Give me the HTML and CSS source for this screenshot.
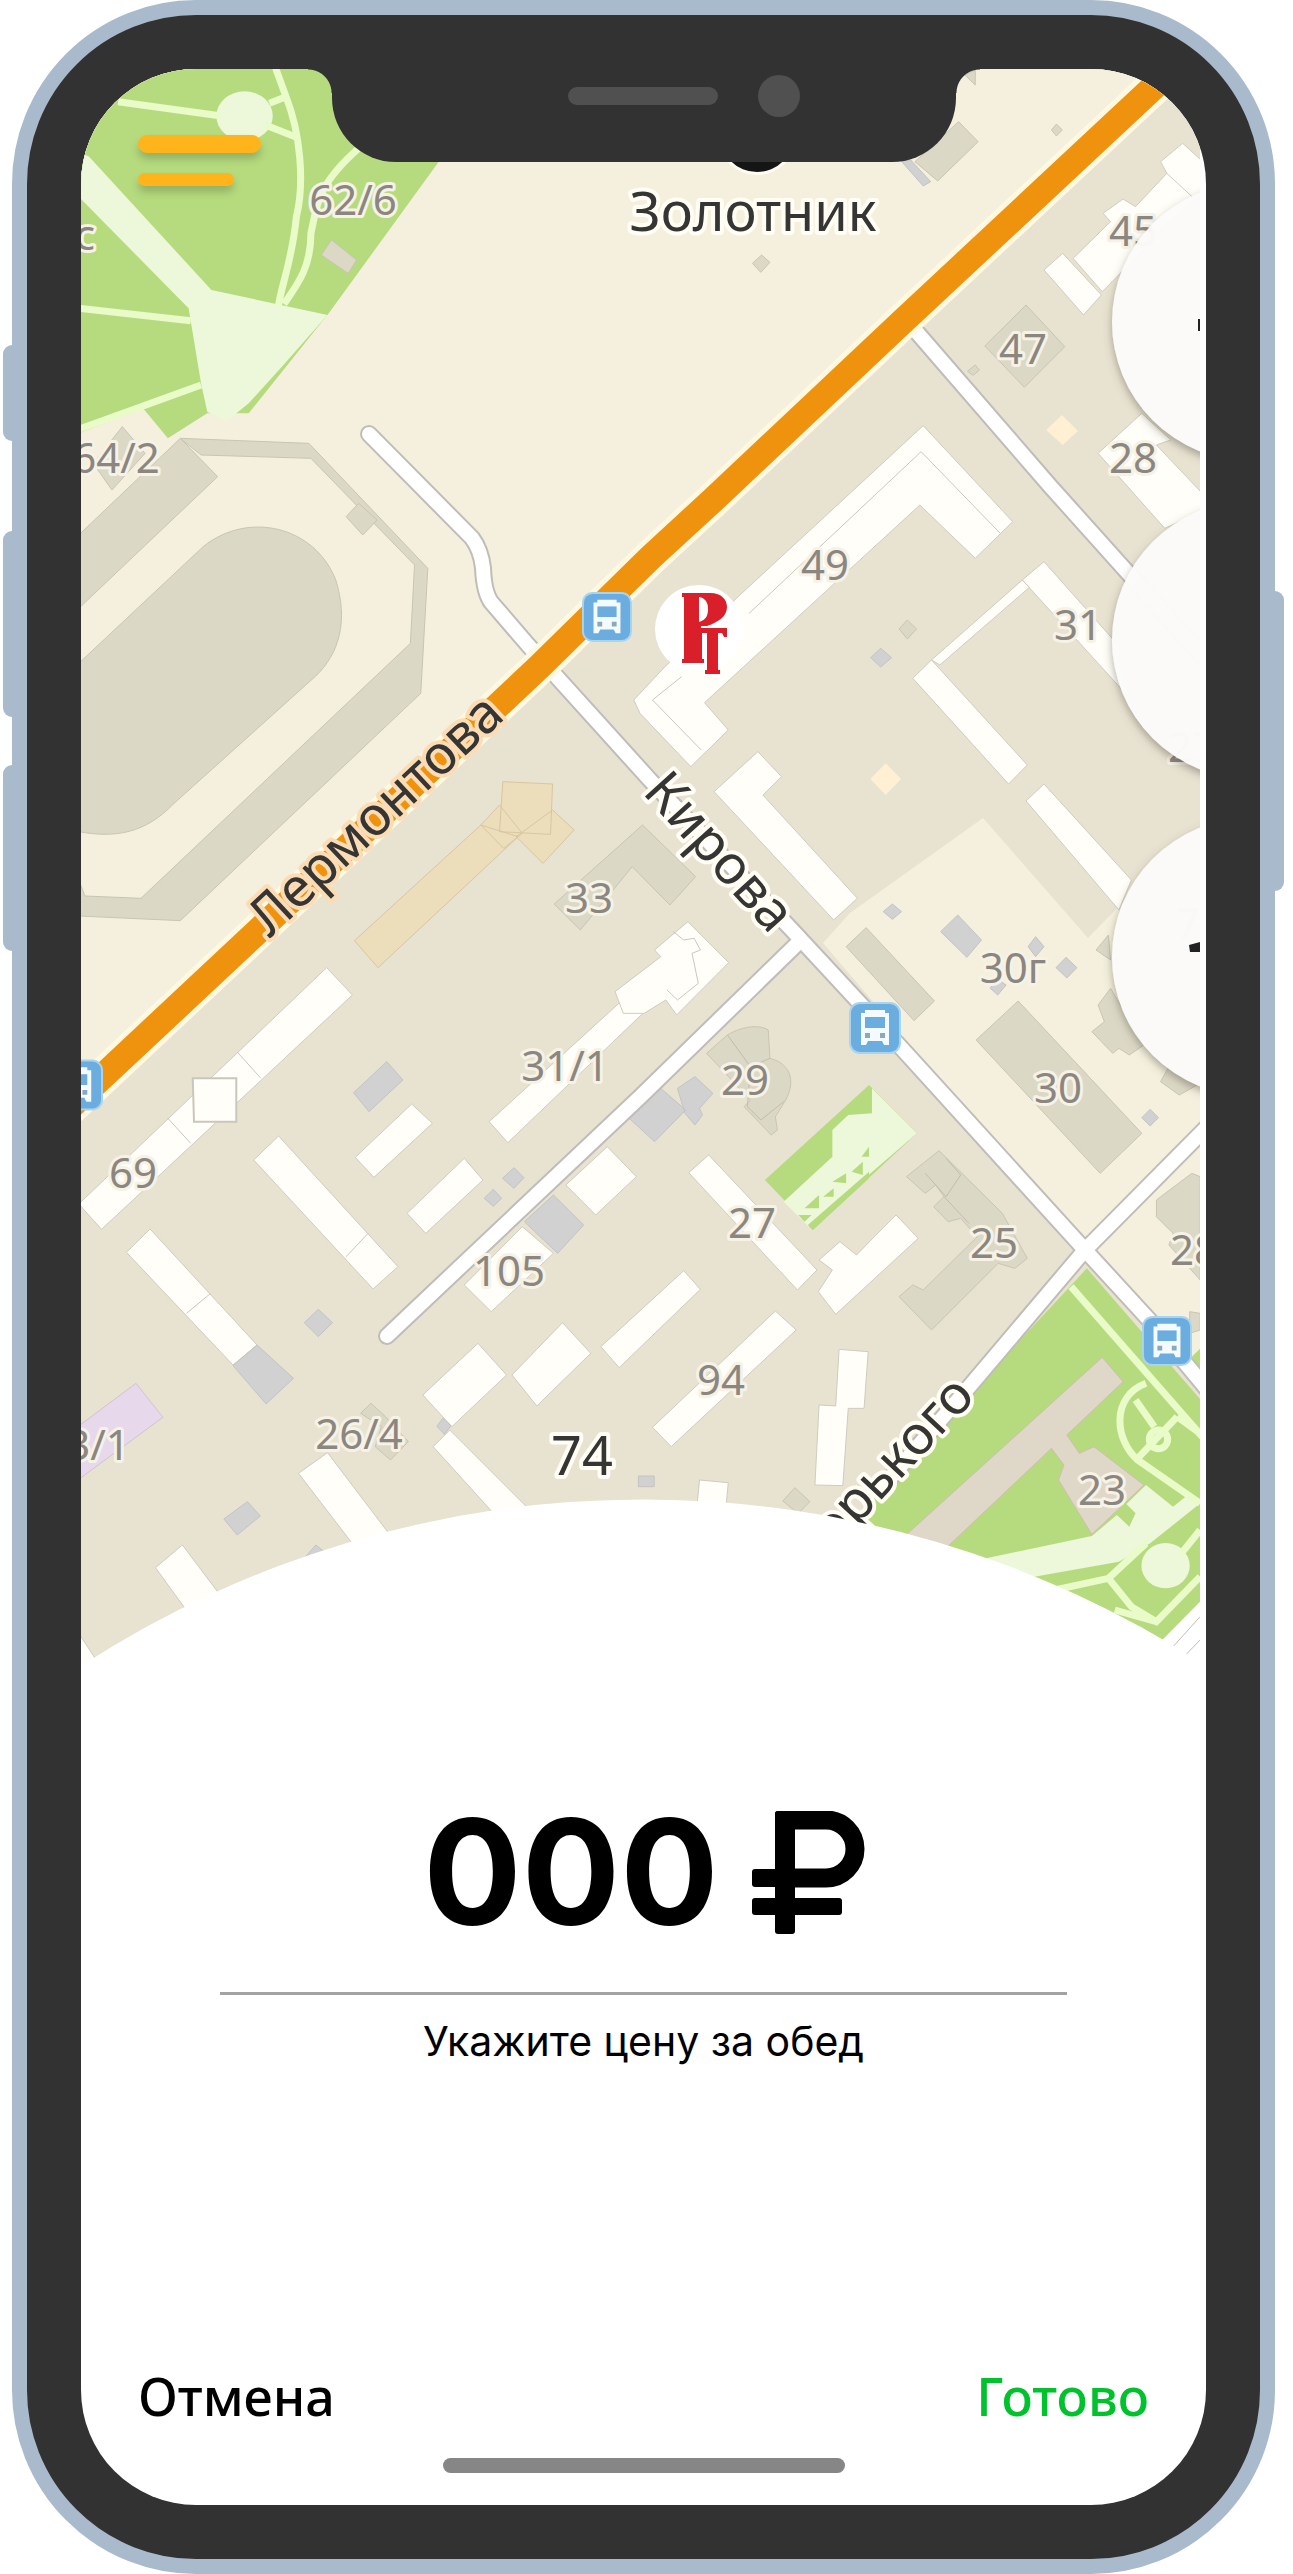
FILE: index.html
```html
<!DOCTYPE html>
<html lang="ru">
<head>
<meta charset="utf-8">
<meta name="viewport" content="width=device-width, initial-scale=1">
<title>Цена за обед</title>
<link rel="stylesheet" href="styles.css">
</head>
<body>
<main class="phone">
  <span class="key key-mute"></span>
  <span class="key key-up"></span>
  <span class="key key-down"></span>
  <span class="key key-power"></span>
  <div class="screen">
    <div class="map">
      <svg class="map-canvas" viewBox="81 69 1125 1631" role="img" aria-label="Карта: улицы Лермонтова, Кирова, Горького">
        <defs>
          <clipPath id="edge"><rect x="81" y="69" width="1119" height="1631"/></clipPath>
          <filter id="lift" x="-20%" y="-20%" width="140%" height="140%"><feDropShadow dx="0" dy="4" stdDeviation="4" flood-color="#5a5644" flood-opacity=".5"/></filter>
          <symbol id="bus" viewBox="0 0 52 52">
            <rect width="52" height="52" rx="11" fill="#a9d4ee"/>
            <rect x="2" y="2" width="48" height="48" rx="9" fill="#6cade0"/>
            <path d="M16 8h20v3h4v32h-5l-2-4H19l-2 4h-5V11h4z" fill="#f4fbff"/>
            <path d="M16 15h20v11H16z" fill="#6cade0"/>
            <path d="M16 31h5v5h-5zM31 31h5v5h-5z" fill="#8ba9bd"/>
          </symbol>
        </defs>
        <g clip-path="url(#edge)">
          <rect class="block" x="81" y="69" width="1125" height="1631"/>
          <path class="pale" d="M75 60H1176L902 322 713 500 651 557 539 667 257 932 75 1102z"/>
          <path class="pale" d="M983 818 1088 938 1120 905 1206 850V1400L1085 1250 823 943 850 913z"/>

          <!-- park and square, north-west -->
          <g transform="scale(.414541 .333333)">
            <path class="green" d="M190 200H1225L790 945 600 1240 500 1240 405 1315 345 1225 190 1300z"/>
            <path class="pale" d="M790 945 590 1260 490 1290 440 1330 850 1100z"/>
            <path class="lawn" d="M510 870 790 945 680 1100 600 1210 545 1265 500 1235 485 1150 455 925 190 590V455L215 470z"/>
            <ellipse class="lawn" cx="590" cy="348" rx="68" ry="74"/>
            <path class="path" d="M285 305 530 347M665 205 690 290C725 400 735 550 715 650 705 780 680 850 672 915M650 310 690 290M640 375 715 412M865 445C760 560 765 620 750 700 750 800 720 850 685 912M190 925 460 962M485 1155 190 1288"/>
            <path class="grey" d="M800 720 860 780 840 820 775 765zM295 1280 350 1360 270 1470 225 1390z"/>
          </g>

          <!-- stadium -->
          <g transform="translate(0 480) scale(.414541 .333333)">
            <path class="grey" d="M190 165 435-125 525-10 190 385z"/>
            <path class="grey" d="M435-125 745-110 1032 265 1015 640 435 1322 190 1308V1200L205 1248 340 1255 990 490 1000 255 750-65 485-75z"/>
            <path class="grey" d="M865 70 910 120 875 165 835 110z"/>
            <path class="grey" d="M190 550 490 200C600 90 760 140 810 300 840 420 820 520 760 590L420 970C350 1060 280 1075 190 1055z"/>
            <path class="tan" d="M1160 1035 1250 1070 912 1463 855 1382zM1333 990 1385 1050 1310 1150 1245 1070zM1160 1035 1205 975 1260 1060 1215 1105zM1213 905 1333 912 1328 1063 1205 1055z"/>
            <path class="grey" d="M1550 1035 1678 1190 1616 1275 1525 1160 1400 1350 1337 1272z"/>
          </g>

          <!-- north-east blocks -->
          <g transform="translate(640) scale(.416454 .333333)">
            <path class="grey" d="M765 365 812 425 715 543 660 485zM780 225 805 210V255z"/>
            <path class="garage" d="M625 480H650L698 545 680 558z"/>
            <path class="grey" d="M927 915 1020 1040 923 1162 828 1038z"/>
            <path class="grey" d="M1000 372l14 18-14 18-12-18zM292 765l20 22-22 30-20-27zM805 1095l10 15-15 16-14-12z"/>
            <path class="house" d="M1303 430 1400 540 1330 595 1110 875 1040 775 1130 665 1112 640 1160 597 1190 620 1265 520 1250 485z"/>
            <path class="house" d="M1015 760 1108 885 1065 945 970 810zM1265 520 1330 595"/>
            <path class="cream" d="M1013 1245 1052 1293 1015 1335 975 1290z"/>
            <path class="house" d="M1205 1240 1100 1360 1260 1585 1350 1535V1480L1240 1335 1275 1320z"/>
          </g>
          <g transform="translate(640 480) scale(.416454 .333333)">
            <path class="house" d="M680-163 895 125 805 235 672 75 155 668 212 750 122 860 0 700-15 660 60 560 240 345z"/>
            <path class="seam" d="M100 590 30 660 147 810M262 400 675-85 865 160"/>
            <path class="house" d="M970 245 1180 540V660L918 300zM918 300 935 322 720 555 700 540zM700 540 930 855 885 912 655 595zM970 912 1180 1200 1150 1290 927 963zM283 815 340 890 295 945 522 1255 465 1320 178 935z"/>
            <path class="garage" d="M578 505l26 28-26 28-24-28z"/>
            <path class="grey" d="M642 420l22 27-22 30-20-30z"/>
            <path class="cream" d="M590 850 627 897 590 945 553 897z"/>
          </g>

          <!-- central blocks -->
          <g transform="translate(0 900) scale(.414541 .333333)">
            <path class="house" d="M788 203 850 285 245 988 190 912z"/>
            <path class="seam" d="M573 457 628 533M405 655 460 730"/>
            <path class="garage" d="M933 485 972 540 890 635 853 578z"/>
            <path class="house" d="M993 612 1043 670 902 832 857 772zM1120 775 1165 840 1027 1000 982 940zM672 708 960 1100 900 1167 612 780zM362 987 620 1335 562 1395 305 1057zM1180 665 1515 285 1600 190 1640 270 1555 335 1225 728zM1465 740 1535 830 1437 945 1365 855zM1260 980 1335 1060 1185 1235 1120 1155z"/>
            <path class="seam" d="M888 1000 835 1070M508 1180 450 1240M1515 285 1555 335"/>
            <path class="garage" d="M1335 885 1408 975 1345 1060 1265 965zM1240 803l24 30-24 32-28-30zM1190 868l20 27-20 24-22-24zM768 1228l34 40-34 42-34-42zM620 1335 708 1435 642 1512 562 1397z"/>
            <path class="house-edge" d="M465 535H570V665H468z"/>
          </g>
          <g transform="translate(640 900) scale(.416454 .333333)">
            <path class="house" d="M-60 275 50 170 35 150 115 65 213 188 88 345 62 300 10 340-40 340z"/>
            <path class="seam" d="M80 95 105 120 130 115 145 150 125 160 140 250 90 300 65 270"/>
            <path class="garage" d="M45 560 110 630 35 725-30 650zM90 565 132 530 175 580 143 625 150 645 132 675 108 640z"/>
            <path class="grey" d="M160 460 210 405C250 375 290 375 308 390L312 475C360 490 375 540 350 600L325 650 330 690 315 705 250 620 265 600z"/>
            <path class="seam-dark" d="M210 405 265 500 312 475M265 500 258 620 290 660 345 605"/>
            <path class="green" d="M550 555 665 700 415 990 300 840z"/>
            <path class="lawn" d="M557 565 665 700 405 980 345 905 462 770V690L500 645 557 640z"/>
            <path class="green" d="M550 740V770H532zM535 785V825L508 815zM495 820V850L462 845zM465 865V890L440 890zM430 885V925L395 925zM380 945H412L395 965zM550 815V835L415 990 403 975z"/>
            <path class="grey" d="M718 752 870 940 930 1075 900 1105 860 1090 700 1290 622 1190 655 1155 680 1170 810 1010 770 955 740 965 705 920 730 890 710 855 685 880 640 830z"/>
            <path class="seam-dark" d="M685 820 735 890 770 825 735 775M730 890 790 970"/>
            <path class="grey" d="M908 303 1205 700 1105 820 807 420zM543 83 707 303 658 362 495 140zM1130 265 1100 315 1115 365 1085 395 1135 460 1150 445 1175 465 1210 435zM1270 500 1250 545 1295 585 1345 550zM1125 105 1095 150 1130 180zM1325 820 1240 900V950L1280 1000 1270 1035 1345 1140V830z"/>
            <path class="garage" d="M763 45 820 120 785 172 722 95zM606 12l22 23-22 23-22-23zM950 110l20 30-20 30-18-30zM1023 172l26 31-24 31-26-31zM855 235l24 20-20 30-18-20zM1225 628l20 25-20 25-20-25z"/>
            <path class="house" d="M165 765 425 1110 378 1170 117 818zM615 945 668 1015 470 1243 428 1175 462 1110 430 1080 480 1025 520 1065 555 1020z"/>
            <path class="grey" d="M1320 1235 1345 1240V1290L1320 1300z"/>
          </g>

          <!-- southern blocks -->
          <g transform="translate(0 1300) scale(.414541 .333333)">
            <path class="violet" d="M328 250 393 352 190 538V378z"/>
            <path class="house" d="M1153 130 1222 225 1090 380 1020 285zM1357 68 1425 160 1295 318 1235 225zM1085 390 1290 645 1205 660 1045 440zM790 458 950 720 865 755 720 520zM440 735 540 900 455 940 375 803zM190 1000 240 1095 190 1110z"/>
            <path class="garage" d="M597 605 628 648 572 705 540 657zM1068 355l20 22-16 26-18-24zM762 735l30 30-50 25-5-20zM1540 528h38v32h-38z"/>
            <path class="grey" d="M895 310 930 350 985 425 942 480 905 440 920 380 870 340z"/>
          </g>
          <g transform="translate(640 1300) scale(.416454 .333333)">
            <path class="house" d="M-94 140 105-88 145-32-50 203zM325 33 375 90 75 440 30 382zM478 148 548 155 538 325 500 325 487 557 420 555 430 315 470 318zM143 540 212 548 205 640 135 640z"/>
            <path class="grey" d="M372 563 408 605 380 640 343 603z"/>
            <path class="green" d="M1073-95 1350 305V1000L1280 1045 500 700 540 620zM1325 170 1350 140V220z"/>
            <path class="plot" d="M1110 172 1160 245 1025 405 1055 460 1090 440 1210 555 1085 703 1005 540 1018 495 988 445 730 750 630 715z"/>
            <path class="lawn" d="M820 778 1085 708 1145 645 1175 680 1190 640 1168 612 1215 555 1280 620 1310 590 1345 610 1225 730 1150 785 940 832z"/>
            <ellipse class="lawn" cx="1262" cy="797" rx="58" ry="68"/>
            <path class="path" d="M1035-40 1350 410M1215 250C1130 290 1140 420 1195 480L1345 610M1190 300 1235 380M1290 350 1195 475M1290 350 1345 400M1215 730 1125 835 940 885M1125 835 1180 920 1240 965 1345 830M1140 930 1240 965M1345 690 1300 760"/>
            <ellipse class="path" cx="1245" cy="418" rx="22" ry="28"/>
            <path class="pavement" d="M1345 905 1250 1025 1350 1100z"/>
            <path class="seam-dark" d="M1345 950 1280 1040M1345 1020 1310 1065"/>
          </g>

          <!-- streets -->
          <g class="street-edge">
            <path d="M369 434 472 538Q481 550 483 568 484 592 491 602L528 645 650 780 792 930 906 1053 1085 1250 1152 1323 1206 1388"/>
            <path d="M798 943 640 1097 387 1336M1206 1128 1085 1250 969 1387 880 1490M908 322 1050 486 1206 660"/>
          </g>
          <g class="street">
            <path d="M369 434 472 538Q481 550 483 568 484 592 491 602L528 645 650 780 792 930 906 1053 1085 1250 1152 1323 1206 1388"/>
            <path d="M798 943 640 1097 387 1336M1206 1128 1085 1250 969 1387 880 1490M908 322 1050 486 1206 660"/>
          </g>
          <path class="avenue-edge" d="M1187 56 902 322 713 500 651 557 539 667 257 932 70 1107"/>
          <path class="avenue" d="M1187 56 902 322 713 500 651 557 539 667 257 932 70 1107"/>

          <circle cx="757" cy="135" r="40" fill="#fffdf0"/>
          <circle cx="757" cy="135" r="37" fill="#151515"/>

          <g class="house-no">
            <text x="353" y="215">62/6</text>
            <text x="85" y="250">с</text>
            <text x="116" y="473">64/2</text>
            <text x="1133" y="246">45</text>
            <text x="1023" y="364">47</text>
            <text x="1133" y="473">28</text>
            <text x="825" y="580">49</text>
            <text x="1078" y="640">31</text>
            <text x="1192" y="762">27</text>
            <text x="589" y="913">33</text>
            <text x="1013" y="983">30г</text>
            <text x="1188" y="938">7</text>
            <text x="565" y="1081">31/1</text>
            <text x="745" y="1095">29</text>
            <text x="1058" y="1103">30</text>
            <text x="133" y="1188">69</text>
            <text x="752" y="1238">27</text>
            <text x="994" y="1258">25</text>
            <text x="1194" y="1265">28</text>
            <text x="509" y="1286">105</text>
            <text x="359" y="1449">26/4</text>
            <text x="98" y="1460">3/1</text>
            <text x="721" y="1395">94</text>
            <text x="1102" y="1505">23</text>
          </g>
          <g class="place">
            <text x="753" y="231">Золотник</text>
            <text x="582" y="1475">74</text>
            <text class="on-avenue" transform="translate(388 828) rotate(-43)">Лермонтова</text>
            <text transform="translate(706 864) rotate(48)">Кирова</text>
            <text transform="translate(897 1483) rotate(-47)">Горького</text>
          </g>

          <use href="#bus" x="582" y="591" width="50" height="52"/>
          <use href="#bus" x="849" y="1002" width="52" height="52"/>
          <use href="#bus" x="1142" y="1315" width="50" height="52"/>
          <use href="#bus" x="52" y="1059" width="51" height="52"/>

          <!-- restaurant marker -->
          <circle cx="699" cy="629" r="44" fill="#fff"/>
          <path fill="#d81f2a" fill-rule="evenodd" d="M682 593h28c12 0 17 7 17 14 0 9-8 15-20 19h-6v2h26v9h-3l-2-4h-4v37h2v4h-15v-4h2v-37h-5v26h2v4h-22v-4h2v-62h-2zM699 597v25c8-2 9-8 9-13 0-7-3-11-9-12z"/>

          <!-- side controls, pushed past the right edge -->
          <g filter="url(#lift)" fill="#fdfcfb" fill-opacity=".96">
            <circle cx="1251" cy="322" r="139"/>
            <circle cx="1251" cy="640" r="139"/>
            <circle cx="1251" cy="957" r="139"/>
          </g>
          <path d="M1198 319h6v12h-6zM1189 945l11-3v10h-10z" fill="#222"/>
        </g>
        <path fill="#fff" d="M81 1700V1666A1033 1033 0 0 1 1206 1666V1700z"/>
      </svg>
      <button class="menu" type="button" aria-label="Меню">
        <span class="menu-bar"></span>
        <span class="menu-bar menu-bar-short"></span>
      </button>
      <div class="notch">
        <span class="speaker"></span>
        <span class="camera"></span>
      </div>
    </div>
    <form class="sheet">
      <div class="price">
        <div class="amount">
          <input class="amount-input" id="price" type="text" inputmode="numeric" value="000">
          <svg class="ruble" viewBox="0 0 113 123" role="img" aria-label="₽">
            <rect x="23" width="20" height="123" rx="3"/>
            <rect y="58" width="60" height="18" rx="3"/>
            <rect y="87" width="90" height="17" rx="3"/>
            <path d="M33 9H74A29 29 0 0 1 74 67H33" fill="none" stroke="#000" stroke-width="19"/>
            <rect x="23" width="30" height="18" rx="3"/>
          </svg>
        </div>
        <label class="hint" for="price">Укажите цену за обед</label>
      </div>
      <div class="actions">
        <button class="action" type="button">Отмена</button>
        <button class="action action-done" type="submit">Готово</button>
      </div>
      <span class="home"></span>
    </form>
  </div>
</main>
</body>
</html>
```
FILE: styles.css
```css
* {
  box-sizing: border-box;
}

body {
  margin: 0;
  padding: 0 18px 0 12px;
  background: #fff;
  color: #000;
  font-family: Inter, "Noto Sans", sans-serif;
}

button,
input {
  margin: 0;
  padding: 0;
  border: 0;
  background: none;
  color: inherit;
  font: inherit;
}

/* Device */
.phone {
  position: relative;
  display: flex;
  min-height: 100vh;
  padding: 54px;
  border: 15px solid #a9bacc;
  border-radius: 184px;
  background: #323232;
}

.key {
  position: absolute;
  left: -24px;
  width: 9px;
  border-radius: 9px 0 0 9px;
  background: #a9bacc;
}

.key-mute {
  top: 330px;
  height: 96px;
}

.key-up {
  top: 516px;
  height: 186px;
}

.key-down {
  top: 750px;
  height: 186px;
}

.key-power {
  top: 576px;
  right: -24px;
  left: auto;
  height: 300px;
  border-radius: 0 9px 9px 0;
}

.screen {
  display: flex;
  flex: 1;
  flex-direction: column;
  overflow: hidden;
  border-radius: 115px;
  background: #fff;
}

.notch {
  position: absolute;
  top: 0;
  left: 50%;
  display: flex;
  justify-content: flex-end;
  gap: 40px;
  width: 624px;
  height: 93px;
  padding: 6px 156px 0 0;
  border-radius: 0 0 64px 64px;
  background: #323232;
  transform: translateX(-50%);
}

.notch::before,
.notch::after {
  position: absolute;
  top: 0;
  width: 24px;
  height: 24px;
  content: "";
}

.notch::before {
  right: 100%;
  background: radial-gradient(circle at 0 100%, transparent 23px, #323232 24px);
}

.notch::after {
  left: 100%;
  background: radial-gradient(circle at 100% 100%, transparent 23px, #323232 24px);
}

.speaker {
  width: 150px;
  height: 18px;
  margin-top: 12px;
  border-radius: 9px;
  background: #505050;
}

.camera {
  width: 42px;
  height: 42px;
  border-radius: 50%;
  background: #505050;
}

/* Map */
.map {
  position: relative;
}

.map-canvas {
  display: block;
  width: 100%;
}

.menu {
  position: absolute;
  top: 66px;
  left: 57px;
  display: flex;
  flex-direction: column;
  gap: 20px;
}

.menu-bar {
  width: 123px;
  height: 18px;
  border-radius: 9px;
  background: #ffb41c;
  box-shadow: 0 6px 9px rgba(0, 0, 0, 0.2);
}

.menu-bar-short {
  width: 96px;
  height: 13px;
}

.map-canvas path,
.map-canvas ellipse {
  vector-effect: non-scaling-stroke;
}

.block {
  fill: #e8e2d1;
}

.pale {
  fill: #f4f0dd;
}

.green {
  fill: #b6db7e;
}

.lawn {
  fill: #ecf8d9;
}

.path {
  fill: none;
  stroke: #e8fbc9;
  stroke-width: 7px;
}

.grey {
  fill: #dcd8c6;
  stroke: #c9c5b4;
  stroke-width: 1px;
}

.plot {
  fill: #dfd7c7;
  stroke: #cdbfae;
  stroke-width: 1px;
}

.garage {
  fill: #d2d1d2;
  stroke: #c5c3c2;
  stroke-width: 1px;
}

.tan {
  fill: #ecdebb;
  stroke: #d8c69f;
  stroke-width: 1px;
}

.violet {
  fill: #e8d8ec;
  stroke: #d3c3d0;
  stroke-width: 1px;
}

.cream {
  fill: #ffefd3;
}

.pavement {
  fill: #fff;
}

.house {
  fill: #fffef8;
  stroke: #cfccc0;
  stroke-width: 1px;
}

.house-edge {
  fill: #fffef8;
  stroke: #c9c6bc;
  stroke-width: 2px;
}

.seam,
.seam-dark {
  fill: none;
  stroke: #c9c7c0;
  stroke-width: 1px;
}

.seam-dark {
  stroke: #c2bdae;
}

.street-edge,
.street,
.avenue-edge,
.avenue {
  fill: none;
  stroke-linecap: round;
  stroke-linejoin: round;
}

.street-edge {
  stroke: #c0bcb8;
  stroke-width: 18px;
}

.street {
  stroke: #fff;
  stroke-width: 14px;
}

.avenue-edge {
  stroke: #fff9e2;
  stroke-width: 36px;
}

.avenue {
  stroke: #ef930f;
  stroke-width: 26px;
}

.house-no,
.place {
  font-family: "Noto Sans", sans-serif;
  paint-order: stroke;
  stroke-linejoin: round;
  text-anchor: middle;
}

.house-no {
  fill: #8b8780;
  font-size: 42px;
  stroke: #f6f2e6;
  stroke-width: 6px;
}

.place {
  fill: #353533;
  font-size: 54px;
  stroke: #fffdf4;
  stroke-width: 8px;
}

.on-avenue {
  stroke: #fcdcb4;
}

/* Price sheet */
.sheet {
  display: flex;
  flex: 1;
  flex-direction: column;
  justify-content: space-between;
  padding: 92px 57px 32px;
}

.price {
  display: flex;
  flex-direction: column;
  align-items: center;
}

.amount {
  display: flex;
  align-items: center;
  justify-content: center;
  gap: 32px;
  width: 847px;
  max-width: 100%;
  padding-bottom: 40px;
  border-bottom: 3px solid #a3a3a3;
}

.amount-input {
  width: 298px;
  height: 160px;
  font-size: 146px;
  font-weight: 700;
  text-align: center;
}

.ruble {
  width: 113px;
  height: 123px;
}

.hint {
  margin-top: 18px;
  font-size: 41px;
  line-height: 56px;
}

.actions {
  display: flex;
  justify-content: space-between;
  margin-top: auto;
}

.action {
  font-family: "Noto Sans", sans-serif;
  font-size: 52px;
  font-weight: 500;
  line-height: 68px;
}

.action-done {
  color: #00c22c;
}

.home {
  align-self: center;
  width: 402px;
  height: 15px;
  margin-top: 28px;
  border-radius: 8px;
  background: #868686;
}
```
